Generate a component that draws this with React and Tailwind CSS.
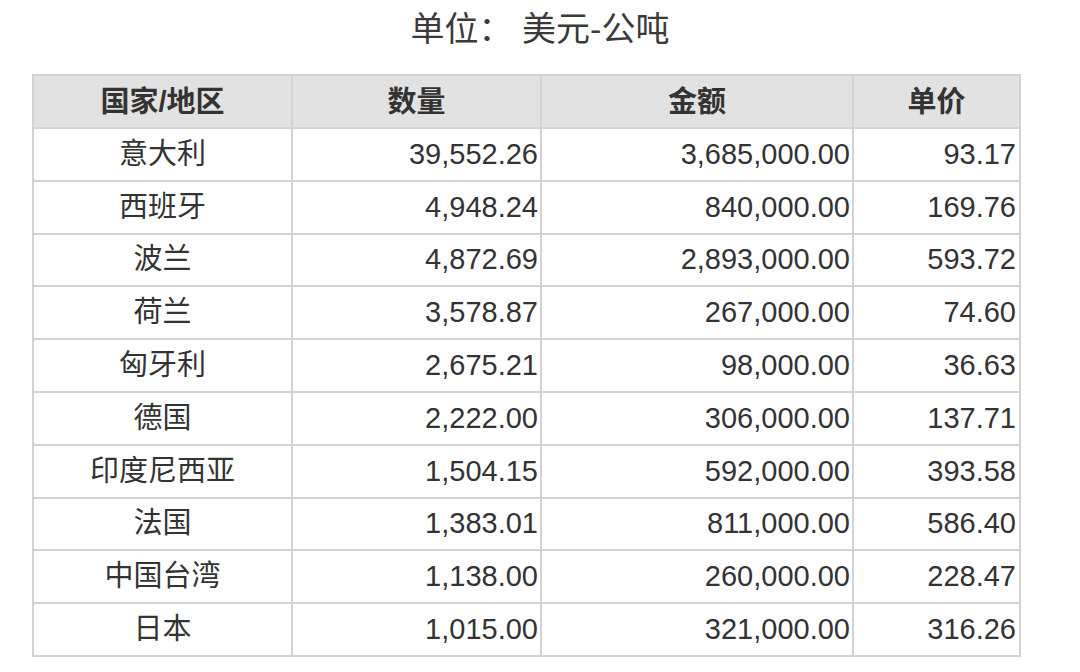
import React from "react";

const rows = [
  ["意大利", "39,552.26", "3,685,000.00", "93.17"],
  ["西班牙", "4,948.24", "840,000.00", "169.76"],
  ["波兰", "4,872.69", "2,893,000.00", "593.72"],
  ["荷兰", "3,578.87", "267,000.00", "74.60"],
  ["匈牙利", "2,675.21", "98,000.00", "36.63"],
  ["德国", "2,222.00", "306,000.00", "137.71"],
  ["印度尼西亚", "1,504.15", "592,000.00", "393.58"],
  ["法国", "1,383.01", "811,000.00", "586.40"],
  ["中国台湾", "1,138.00", "260,000.00", "228.47"],
  ["日本", "1,015.00", "321,000.00", "316.26"],
];

export default function App() {
  return (
    <div
      className="w-[1080px] h-[672px] bg-white text-[#333] overflow-hidden"
      style={{ fontFamily: '"Liberation Sans", "Noto Sans CJK SC", sans-serif' }}
    >
      {/* Title */}
      <div className="h-[62px] flex items-center justify-center text-[34px] leading-none text-[#3a3a3a] pb-[4px]">
        单位：&nbsp;美元-公吨
      </div>

      {/* Table */}
      <div className="pl-[32px] pt-[12px]">
        <table className="border-collapse w-[989px] text-[29px] leading-none">
          <colgroup>
            <col className="w-[259px]" />
            <col className="w-[249px]" />
            <col className="w-[312px]" />
            <col className="w-[167px]" />
          </colgroup>
          <thead>
            <tr className="h-[53px] bg-[#e2e2e2]">
              {["国家/地区", "数量", "金额", "单价"].map((h) => (
                <th
                  key={h}
                  className="border-2 border-[#d3d3d3] font-bold text-center align-middle p-0 pt-[2px]"
                >
                  {h}
                </th>
              ))}
            </tr>
          </thead>
          <tbody>
            {rows.map((r) => (
              <tr key={r[0]} className="h-[52.8px]">
                <td className="border-2 border-[#d3d3d3] text-center align-middle p-0">{r[0]}</td>
                <td className="border-2 border-[#d3d3d3] text-right align-middle p-0 pr-[2px]">{r[1]}</td>
                <td className="border-2 border-[#d3d3d3] text-right align-middle p-0 pr-[2px]">{r[2]}</td>
                <td className="border-2 border-[#d3d3d3] text-right align-middle p-0 pr-[3px]">{r[3]}</td>
              </tr>
            ))}
          </tbody>
        </table>
      </div>
    </div>
  );
}
